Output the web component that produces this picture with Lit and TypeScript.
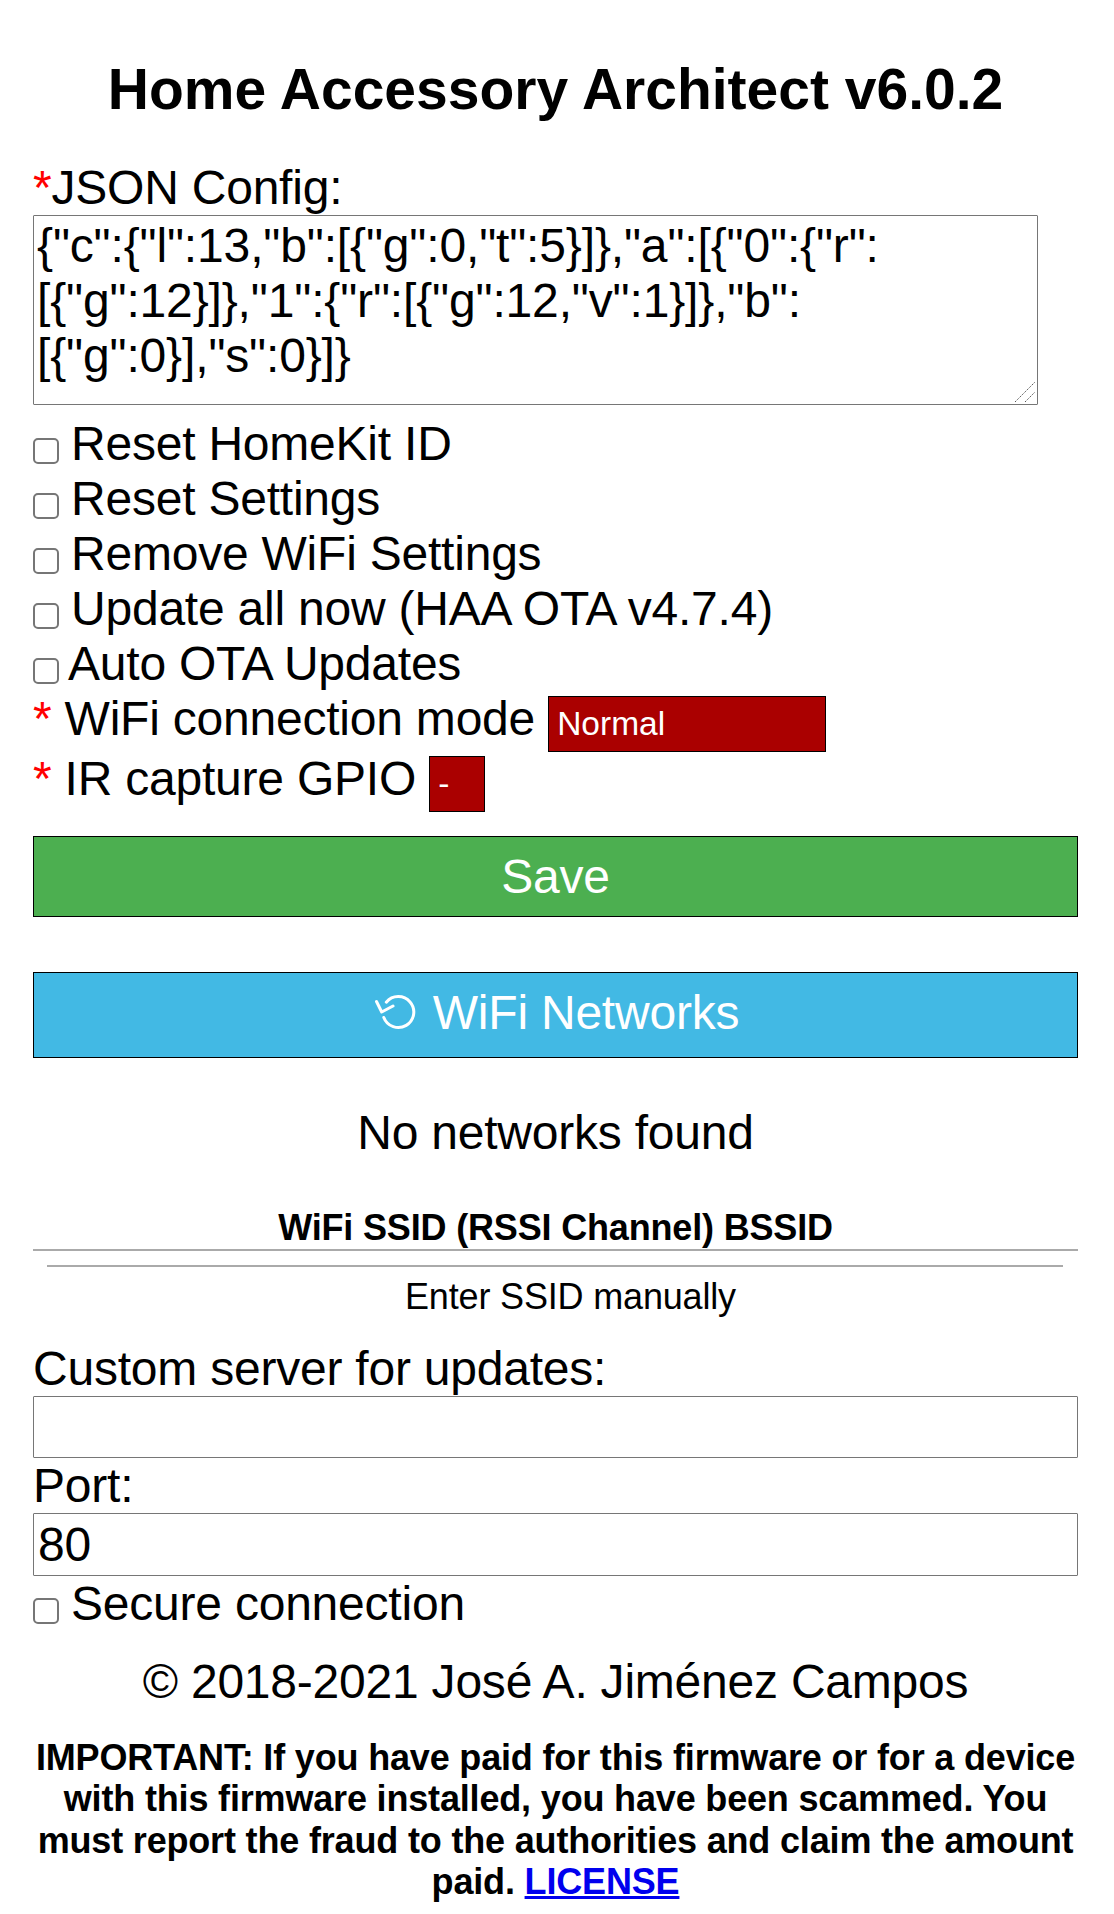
import { LitElement, html, css } from "lit";
import { customElement } from "lit/decorators.js";

const CONFIG = '{"c":{"l":13,"b":[{"g":0,"t":5}]},"a":[{"0":{"r":[{"g":12}]},"1":{"r":[{"g":12,"v":1}]},"b":[{"g":0}],"s":0}]}';

@customElement("app-root")
export class AppRoot extends LitElement {
  static styles = css`
    :host {
      display: block;
      background: #fff;
      color: #000;
      font-family: "Liberation Sans", Arial, sans-serif;
      font-size: 48px;
      line-height: 55px;
      letter-spacing: -0.22px;
    }
    .page {
      padding: 57px 36px 6px 33px;
    }
    h1 {
      margin: 0 0 39px;
      font-size: 57px;
      line-height: 64px;
      letter-spacing: 0;
      font-weight: bold;
      text-align: center;
    }
    .line {
      display: block;
      height: 55px;
    }
    .req {
      color: #f00;
    }
    .editor {
      position: relative;
      width: 1005px;
      height: 190px;
      margin-bottom: 11px;
    }
    textarea {
      display: block;
      box-sizing: border-box;
      width: 100%;
      height: 100%;
      margin: 0;
      padding: 2px 3px;
      border: 1px solid #767676;
      border-radius: 1px;
      font: 48px/55px "Liberation Sans", Arial, sans-serif;
      letter-spacing: -0.15px;
      color: #000;
      background: #fff;
      resize: none;
      overflow: hidden;
    }
    .grip {
      position: absolute;
      right: 1px;
      bottom: 1px;
      width: 22px;
      height: 22px;
      pointer-events: none;
    }
    input[type="checkbox"] {
      appearance: none;
      -webkit-appearance: none;
      box-sizing: border-box;
      width: 26px;
      height: 26px;
      margin: 0 12px 0 0;
      vertical-align: -4px;
      border: 2px solid #767676;
      border-radius: 5px;
      background: #fff;
    }
    .tight input[type="checkbox"] {
      margin-right: 9px;
    }
    .selrow {
      height: 60px;
    }
    select {
      appearance: none;
      -webkit-appearance: none;
      box-sizing: border-box;
      height: 56px;
      margin: 0;
      padding: 0 8px;
      border: 1px solid #000;
      border-radius: 0;
      background: #a00;
      color: #fff;
      font: 33.5px "Liberation Sans", Arial, sans-serif;
    }
    .mode {
      width: 278px;
    }
    .gpio {
      width: 56px;
    }
    .btn {
      display: flex;
      align-items: center;
      justify-content: center;
      box-sizing: border-box;
      width: 100%;
      border: 1px solid #000;
      padding: 0;
      color: #fff;
      font: 48px/55px "Liberation Sans", Arial, sans-serif;
      letter-spacing: -0.22px;
    }
    .save {
      height: 81px;
      margin-top: 25px;
      background: #4caf50;
    }
    .wifi {
      height: 86px;
      margin-top: 55px;
      padding: 0 0 5px 3px;
      background: #42b9e4;
      gap: 16px;
    }
    .wifi svg {
      width: 42px;
      height: 42px;
      flex: none;
    }
    .center {
      text-align: center;
    }
    .none {
      margin-top: 47px;
    }
    .thead {
      margin-top: 47px;
      padding-bottom: 1px;
      font-size: 36px;
      line-height: 41px;
      letter-spacing: -0.17px;
      font-weight: bold;
      text-align: center;
      border-bottom: 2px solid #aaa;
    }
    .rule {
      height: 2px;
      margin: 14px 15px 0 14px;
      background: #aaa;
    }
    .manual {
      margin-top: 9px;
      padding-left: 30px;
      font-size: 36px;
      line-height: 41px;
      letter-spacing: -0.17px;
      text-align: center;
    }
    .custom {
      margin-top: 24px;
    }
    input[type="text"] {
      display: block;
      box-sizing: border-box;
      width: 100%;
      height: 63px;
      margin: 0;
      padding: 1px 4px;
      border: 1px solid #767676;
      border-radius: 1px;
      color: #000;
      background: #fff;
      font: 48px "Liberation Sans", Arial, sans-serif;
      letter-spacing: -0.22px;
    }
    input.short {
      height: 62px;
    }
    .copy {
      margin-top: 23px;
    }
    .notice {
      margin-top: 28px;
      font-size: 36px;
      line-height: 41.4px;
      letter-spacing: -0.17px;
      font-weight: bold;
      text-align: center;
    }
    a {
      color: #00e;
    }
  `;

  private check(label: string, tight = false) {
    return html`<label class="line ${tight ? "tight" : ""}"><input type="checkbox" />${label}</label>`;
  }

  render() {
    return html`
      <div class="page">
        <h1>Home Accessory Architect v6.0.2</h1>
        <div class="line"><span class="req">*</span>JSON Config:</div>
        <div class="editor">
          <textarea spellcheck="false" .value=${CONFIG}></textarea>
          <svg class="grip" viewBox="0 0 22 22" fill="none" stroke="#555" stroke-width="1" stroke-dasharray="1.4 1">
            <path d="M0 20 L20 0"></path>
            <path d="M10 20 L20 10"></path>
          </svg>
        </div>
        ${this.check("Reset HomeKit ID")}
        ${this.check("Reset Settings")}
        ${this.check("Remove WiFi Settings")}
        ${this.check("Update all now (HAA OTA v4.7.4)")}
        ${this.check("Auto OTA Updates", true)}
        <div class="line selrow">
          <span class="req">*</span> WiFi connection mode
          <select class="mode"><option>Normal</option></select>
        </div>
        <div class="line selrow">
          <span class="req">*</span> IR capture GPIO
          <select class="gpio"><option>-</option></select>
        </div>
        <button class="btn save">Save</button>
        <button class="btn wifi">
          <svg viewBox="0 0 42 42" fill="none" stroke="#fff" stroke-width="3" stroke-linecap="round" stroke-linejoin="round">
            <path d="M11.3 10.2 A15.5 15.5 0 1 1 8.8 25.5"></path>
            <path d="M1.5 9.5 L6.7 20 L18 14"></path>
          </svg>
          <span>WiFi Networks</span>
        </button>
        <div class="center none">No networks found</div>
        <div class="thead">WiFi SSID (RSSI Channel) BSSID</div>
        <div class="rule"></div>
        <div class="manual">Enter SSID manually</div>
        <div class="line custom">Custom server for updates:</div>
        <input class="short" type="text" />
        <div class="line">Port:</div>
        <input type="text" value="80" />
        ${this.check("Secure connection")}
        <div class="center copy">© 2018-2021 José A. Jiménez Campos</div>
        <div class="notice">
          IMPORTANT: If you have paid for this firmware or for a device with this firmware installed, you have been scammed. You must report the fraud to the authorities and claim the amount paid.
          <a href="#">LICENSE</a>
        </div>
      </div>
    `;
  }
}
